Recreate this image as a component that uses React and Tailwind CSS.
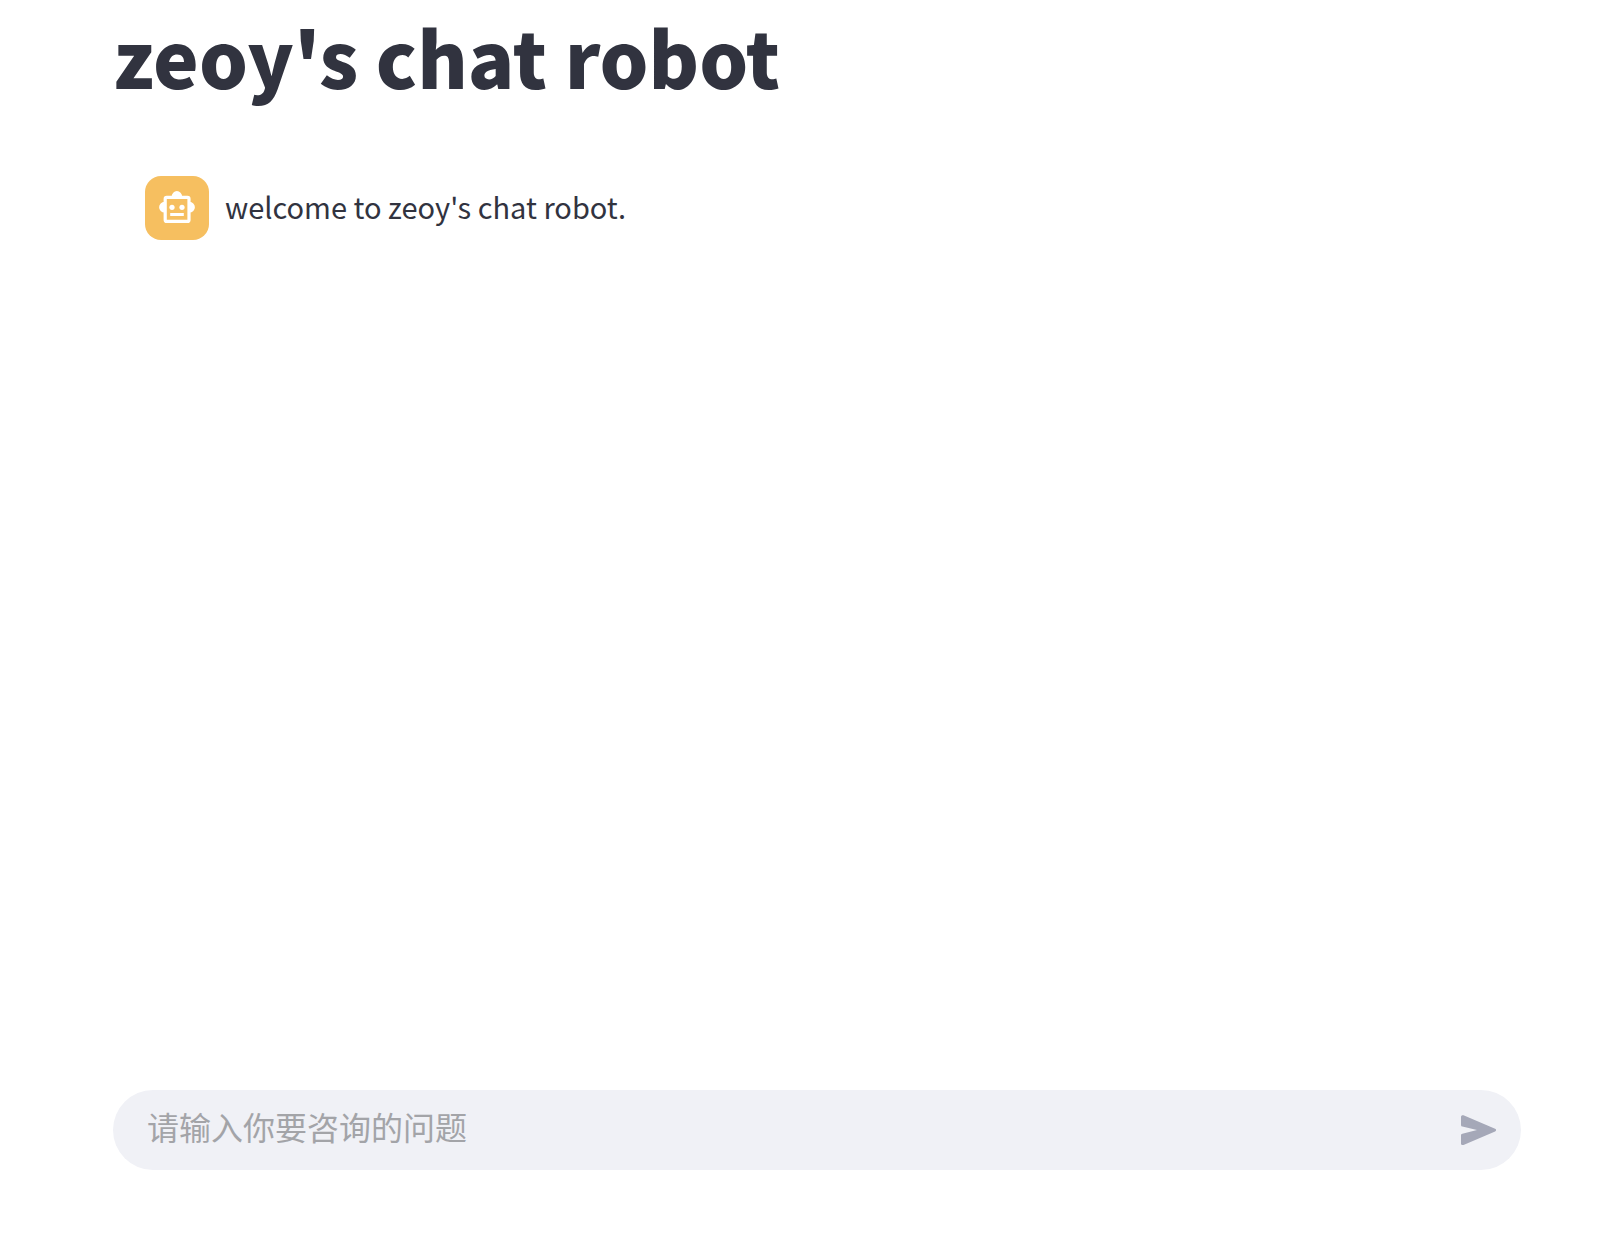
const messages = [{ id: 1, text: "welcome to zeoy's chat robot." }];

export default function App() {
  return (
    <div className="flex min-h-screen flex-col bg-white pr-[85px] pl-[113px] font-['Noto_Sans_CJK_SC',sans-serif] text-[#31333f]">
      <main className="flex-1 pt-2">
        <h1 className="text-[77px] leading-[96px] font-black">
          zeoy's chat robot
        </h1>
        <div className="mt-10 flex flex-col gap-8 p-8">
          {messages.map((message) => (
            <Message key={message.id} text={message.text} />
          ))}
        </div>
      </main>
      <ChatInput />
    </div>
  );
}

function Message({ text }) {
  return (
    <div className="flex items-center gap-4">
      <div className="flex size-16 shrink-0 items-center justify-center rounded-2xl bg-[#f6bf60]">
        <RobotIcon />
      </div>
      <p className="pb-1 text-[29px] leading-[48px]">{text}</p>
    </div>
  );
}

function ChatInput() {
  return (
    <form
      className="mb-16 flex h-20 items-center rounded-full bg-[#f0f1f6] pr-6 pl-[34px]"
      onSubmit={(e) => e.preventDefault()}
    >
      <input
        type="text"
        aria-label="请输入你要咨询的问题"
        placeholder="请输入你要咨询的问题"
        className="min-w-0 flex-1 bg-transparent pb-2 text-[32px] leading-[48px] outline-none placeholder:text-[#a3a4a8]"
      />
      <button type="submit" aria-label="Send" className="text-[#a5a8b8]">
        <SendIcon />
      </button>
    </form>
  );
}

function RobotIcon() {
  return (
    <svg width="38" height="34" viewBox="0 0 38 34" fill="none">
      <path
        d="M13.700 5.500v-.2a5.200 5.200 0 0 1 10.400 0v.2zM6.500 10.800a5.400 5.400 0 0 0 0 10.800zM31.500 10.800a5.400 5.400 0 0 1 0 10.800z"
        fill="white"
      />
      <rect
        x="7.200"
        y="6.400"
        width="23.800"
        height="24"
        rx="1.500"
        stroke="white"
        strokeWidth="3.200"
      />
      <circle cx="14" cy="16.300" r="2.600" fill="white" />
      <circle cx="24" cy="16.300" r="2.600" fill="white" />
      <path d="M12.200 22h13.600v3H12.200z" fill="white" />
    </svg>
  );
}

function SendIcon() {
  return (
    <svg width="36" height="31" viewBox="0 0 36 31" fill="currentColor">
      <path d="M0 1.800C0 .5 1.300-.2 2.500.3L34.100 13.700c1.400.6 1.400 2.200 0 2.800L2.500 29.900C1.300 30.400 0 29.700 0 28.400V20.500c0-.9.500-1.500 1.400-1.700L16 15.100 1.400 11.600C.5 11.400 0 10.800 0 9.900z" />
    </svg>
  );
}
